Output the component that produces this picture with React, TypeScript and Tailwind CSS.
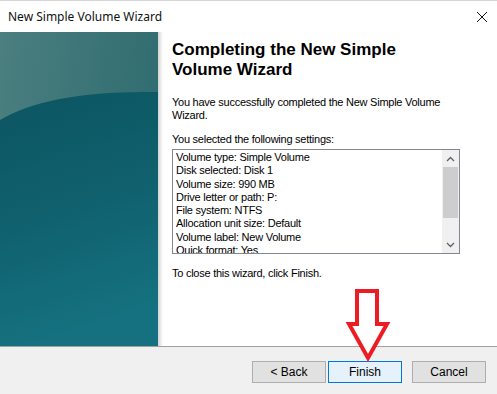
const settings = [
  "Volume type: Simple Volume",
  "Disk selected: Disk 1",
  "Volume size: 990 MB",
  "Drive letter or path: P:",
  "File system: NTFS",
  "Allocation unit size: Default",
  "Volume label: New Volume",
  "Quick format: Yes",
];

const SidePanel = () => (
  <div className="flex h-full shrink-0">
    <svg width="158" height="314" viewBox="0 0 158 314" className="block">
      <defs>
        <linearGradient id="topGlow" x1="0" y1="0" x2="1" y2="0.3">
          <stop offset="0" stopColor="#4b7f80" />
          <stop offset="1" stopColor="#306c70" />
        </linearGradient>
        <linearGradient id="deep" x1="0" y1="0" x2="0.2" y2="1">
          <stop offset="0" stopColor="#0c5561" />
          <stop offset="0.5" stopColor="#10606e" />
          <stop offset="1" stopColor="#15717f" />
        </linearGradient>
      </defs>
      <rect width="158" height="314" fill="url(#topGlow)" />
      <path d="M0,88 Q50,58 158,60 L158,314 L0,314 Z" fill="url(#deep)" />
    </svg>
    <div className="w-[5px] h-full bg-gradient-to-r from-[#d4d4d4] to-white" />
  </div>
);

const ScrollBar = () => (
  <div className="w-[17px] h-full bg-[#f0f0f0] flex flex-col items-center">
    <div className="h-[17px] w-full flex items-center justify-center">
      <svg width="9" height="6" viewBox="0 0 9 6">
        <path d="M1,5 L4.5,1.5 L8,5" fill="none" stroke="#606060" strokeWidth="1.3" />
      </svg>
    </div>
    <div className="w-[15px] h-[51px] bg-[#cdcdcd]" />
    <div className="flex-1" />
    <div className="h-[17px] w-full flex items-center justify-center">
      <svg width="9" height="6" viewBox="0 0 9 6">
        <path d="M1,1 L4.5,4.5 L8,1" fill="none" stroke="#606060" strokeWidth="1.3" />
      </svg>
    </div>
  </div>
);

const Button = ({ label, active }: { label: string; active?: boolean }) => (
  <div
    className={
      active
        ? "w-[74px] h-[22px] flex items-center justify-center border border-[#0078d7] bg-[#e5f1fb] text-[12px]"
        : "w-[74px] h-[22px] flex items-center justify-center border border-[#adadad] bg-[#e1e1e1] text-[12px]"
    }
  >
    {label}
  </div>
);

export default function App() {
  return (
    <div
      className="relative w-[497px] h-[394px] bg-white overflow-hidden flex flex-col text-black"
      style={{ fontFamily: '"Liberation Sans", Arial, sans-serif' }}
    >
      <div className="h-[32px] shrink-0 flex items-center justify-between pl-[8px] pr-[10px] border-t border-[#d6d6d6]">
        <span className="text-[12px] text-[#111]" style={{ fontFamily: '"Noto Sans", sans-serif' }}>
          New Simple Volume Wizard
        </span>
        <svg width="10" height="10" viewBox="0 0 10 10">
          <path d="M0,0 L10,10 M10,0 L0,10" stroke="#111" strokeWidth="1" />
        </svg>
      </div>

      <div className="h-[314px] shrink-0 flex">
        <SidePanel />
        <div className="pl-[9px] pt-[8px] flex flex-col text-[11px] leading-[13px] tracking-[-0.25px]">
          <h1 className="text-[17px] leading-[20px] font-bold w-[260px] tracking-normal">
            Completing the New Simple Volume Wizard
          </h1>
          <p className="mt-[16px] w-[275px]">
            You have successfully completed the New Simple Volume Wizard.
          </p>
          <p className="mt-[11px]">You selected the following settings:</p>
          <div className="mt-[3px] w-[288px] h-[105px] border border-[#828790] flex overflow-hidden">
            <div className="flex-1 pl-[3px] pt-[1px] leading-[13.3px] overflow-hidden">
              {settings.map((s) => (
                <div key={s} className="whitespace-nowrap">
                  {s}
                </div>
              ))}
            </div>
            <ScrollBar />
          </div>
          <p className="mt-[13px]">To close this wizard, click Finish.</p>
        </div>
      </div>

      <div className="h-px shrink-0 bg-[#a0a0a0]" />
      <div className="flex-1 bg-[#f0f0f0] flex items-start justify-end pt-[14px] pr-[11px]">
        <div className="flex">
          <Button label="< Back" />
          <div className="w-[2px]" />
          <Button label="Finish" active />
          <div className="w-[10px]" />
          <Button label="Cancel" />
        </div>
      </div>

      <svg
        className="absolute left-[343px] top-[287px]"
        width="50"
        height="76"
        viewBox="0 0 50 76"
      >
        <path
          d="M14,4 L34,4 L34,37 L44,37 L25,71 L6,37 L14,37 Z"
          fill="white"
          stroke="#ed1c24"
          strokeWidth="4"
          strokeLinejoin="miter"
        />
      </svg>
    </div>
  );
}
